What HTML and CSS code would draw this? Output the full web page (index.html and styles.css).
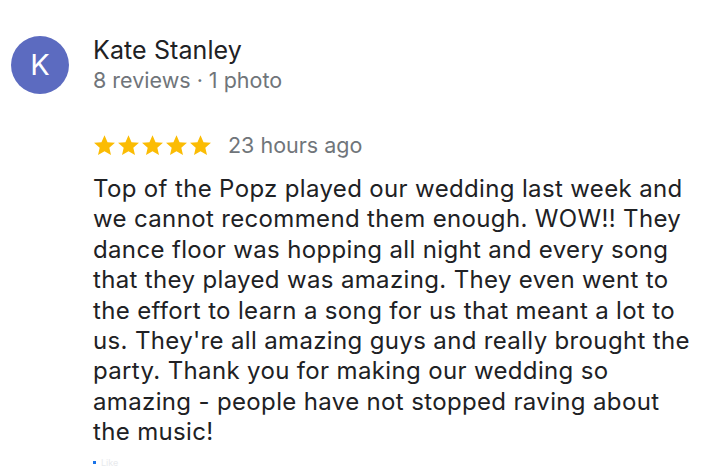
FILE: index.html
```html
<!DOCTYPE html>
<html lang="en">
<head>
  <meta charset="UTF-8">
  <title>Review - Kate Stanley</title>
  <meta name="viewport" content="width=device-width, initial-scale=1.0">
  <link rel="stylesheet" href="styles.css">
</head>
<body>

  <div class="review">
    <div class="author">
      <div class="avatar">K</div>
      <div class="author-info">
        <div class="author-name">Kate Stanley</div>
        <div class="author-meta">8 reviews · 1 photo</div>
      </div>
    </div>

    <div class="review-body">
      <div class="rating">
        <div class="stars">
          <svg class="star" viewBox="1 1 22 22"><path d="M12 2.2l2.9 6.6 7.1.6-5.4 4.7 1.6 7-6.2-3.7-6.2 3.7 1.6-7L2 9.4l7.1-.6z"/></svg>
          <svg class="star" viewBox="1 1 22 22"><path d="M12 2.2l2.9 6.6 7.1.6-5.4 4.7 1.6 7-6.2-3.7-6.2 3.7 1.6-7L2 9.4l7.1-.6z"/></svg>
          <svg class="star" viewBox="1 1 22 22"><path d="M12 2.2l2.9 6.6 7.1.6-5.4 4.7 1.6 7-6.2-3.7-6.2 3.7 1.6-7L2 9.4l7.1-.6z"/></svg>
          <svg class="star" viewBox="1 1 22 22"><path d="M12 2.2l2.9 6.6 7.1.6-5.4 4.7 1.6 7-6.2-3.7-6.2 3.7 1.6-7L2 9.4l7.1-.6z"/></svg>
          <svg class="star" viewBox="1 1 22 22"><path d="M12 2.2l2.9 6.6 7.1.6-5.4 4.7 1.6 7-6.2-3.7-6.2 3.7 1.6-7L2 9.4l7.1-.6z"/></svg>
        </div>
        <span class="time">23 hours ago</span>
      </div>

      <p class="review-text">
        Top of the Popz played our wedding last week and<br>
        we cannot recommend them enough. WOW!! They<br>
        dance floor was hopping all night and every song<br>
        that they played was amazing. They even went to<br>
        the effort to learn a song for us that meant a lot to<br>
        us. They're all amazing guys and really brought the<br>
        party. Thank you for making our wedding so<br>
        amazing - people have not stopped raving about<br>
        the music!
      </p>

      <div class="actions">
        <span class="like-icon"></span>
        <span class="like-text">Like</span>
      </div>
    </div>
  </div>

</body>
</html>
```

FILE: styles.css
```css
body {
  margin: 0;
  font-family: Inter, "Liberation Sans", sans-serif;
  background: #fff;
  color: #202124;
  overflow: hidden;
}
.review {
  padding: 35px 0 0 11px;
}
.author {
  display: flex;
  align-items: center;
  gap: 24px;
}
.avatar {
  width: 58px;
  height: 58px;
  border-radius: 50%;
  background: #5c6bc0;
  color: #fff;
  font-size: 29px;
  display: flex;
  align-items: center;
  justify-content: center;
}
.author-name {
  font-size: 25px;
  line-height: 31px;
  letter-spacing: 0.1px;
  color: #202124;
}
.author-meta {
  font-size: 21.5px;
  line-height: 28px;
  color: #70757a;
}
.review-body {
  padding-left: 82px;
}
.rating {
  display: flex;
  align-items: center;
  gap: 16px;
  margin-top: 38px;
}
.stars {
  display: flex;
  gap: 1px;
}
.star {
  width: 23px;
  height: 23px;
  fill: #fbbc04;
}
.time {
  font-size: 21.5px;
  line-height: 26px;
  color: #70757a;
}
.review-text {
  margin: 16px 0 0;
  font-size: 24px;
  line-height: 30.4px;
  letter-spacing: 0.35px;
  color: #202124;
}
.actions {
  display: flex;
  align-items: center;
  gap: 5px;
  margin-top: 10px;
}
.like-icon {
  width: 3px;
  height: 3px;
  background: #1a73e8;
}
.like-text {
  font-size: 9px;
  line-height: 9px;
  color: #e8eaed;
}
```
